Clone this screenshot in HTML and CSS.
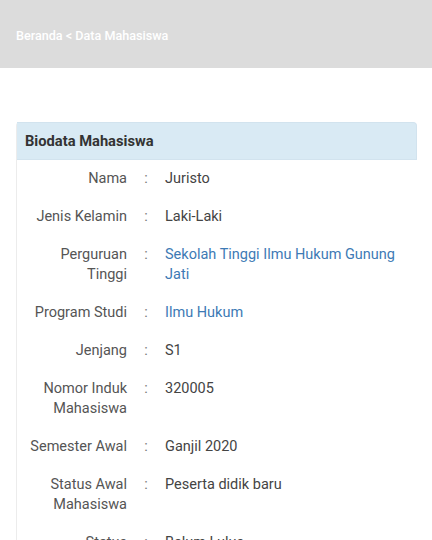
FILE: index.html
```html
<!DOCTYPE html>
<html lang="id">
<head>
<meta charset="utf-8">
<title>Data Mahasiswa</title>
<link rel="stylesheet" href="styles.css">
</head>
<body>
<header class="topbar">
  <nav class="crumbs">Beranda &lt; Data Mahasiswa</nav>
</header>
<main class="content">
  <section class="card">
    <div class="card-head">Biodata Mahasiswa</div>
    <div class="card-body">
      <div class="row"><div class="lbl">Nama</div><div class="sep">:</div><div class="val">Juristo</div></div>
      <div class="row"><div class="lbl">Jenis Kelamin</div><div class="sep">:</div><div class="val">Laki-Laki</div></div>
      <div class="row"><div class="lbl">Perguruan Tinggi</div><div class="sep">:</div><div class="val link">Sekolah Tinggi Ilmu Hukum Gunung Jati</div></div>
      <div class="row"><div class="lbl">Program Studi</div><div class="sep">:</div><div class="val link">Ilmu Hukum</div></div>
      <div class="row"><div class="lbl">Jenjang</div><div class="sep">:</div><div class="val">S1</div></div>
      <div class="row"><div class="lbl">Nomor Induk Mahasiswa</div><div class="sep">:</div><div class="val">320005</div></div>
      <div class="row"><div class="lbl">Semester Awal</div><div class="sep">:</div><div class="val">Ganjil 2020</div></div>
      <div class="row"><div class="lbl">Status Awal Mahasiswa</div><div class="sep">:</div><div class="val">Peserta didik baru</div></div>
      <div class="row"><div class="lbl">Status</div><div class="sep">:</div><div class="val">Belum Lulus</div></div>
    </div>
  </section>
</main>
</body>
</html>
```
FILE: styles.css
```css
* { box-sizing: border-box; }
html, body { margin: 0; padding: 0; background: #fff; }
body { font-family: Roboto, "Noto Sans", sans-serif; color: #444; }

.topbar {
  height: 68px;
  background: #dcdcdc;
  display: flex;
  align-items: center;
  padding: 3px 16px 0;
}
.crumbs {
  color: #fff;
  font-size: 12.6px;
  font-weight: 500;
}

.content { padding: 54px 15px 0 16px; }

.card {
  border-left: 1px solid #ececec;
  border-radius: 4px 4px 0 0;
}
.card-head {
  height: 38px;
  background: #d9eaf4;
  border: 1px solid #d2e3ee;
  border-left: 0;
  border-radius: 0 4px 0 0;
  display: flex;
  align-items: center;
  padding-left: 8px;
  font-size: 14.7px;
  font-weight: 700;
  color: #333;
}
.card-body { padding: 0; }
.row {
  display: grid;
  grid-template-columns: 110px 38px 1fr;
  padding: 9px 0;
  font-size: 14.5px;
  line-height: 20px;
}
.lbl { text-align: right; color: #555; padding-left: 10px; }
.sep { text-align: center; color: #777; }
.val { color: #444; padding-right: 10px; }
.link { color: #3d7ab5; }
```
